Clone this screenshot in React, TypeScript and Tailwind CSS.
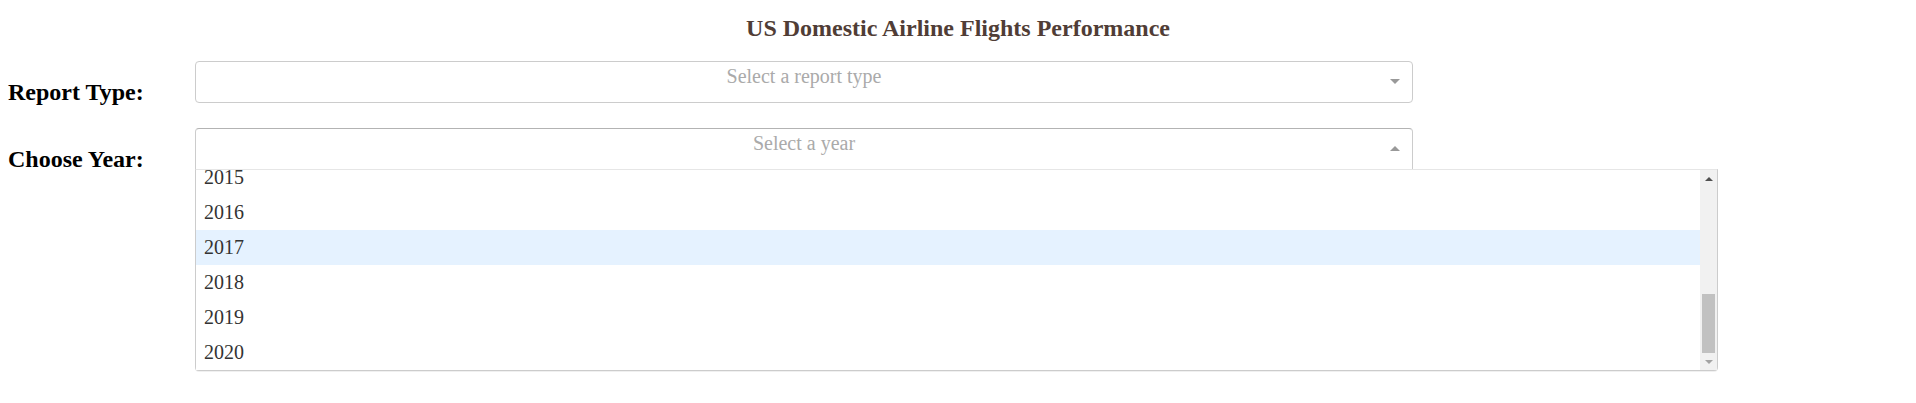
const years = Array.from({ length: 16 }, (_, i) => 2005 + i);

function Label({ children }: { children: React.ReactNode }) {
  return (
    <h2 className="w-[195px] shrink-0 pl-2 pt-[17px] text-[24px] font-bold leading-[28px] text-black">
      {children}
    </h2>
  );
}

function ReportTypeSelect() {
  return (
    <div className="relative h-[42px] w-[1218px] rounded-[4px] border border-[#ccc] bg-white">
      <div className="w-full text-center text-[20px] leading-[28px] text-[#aaa]">Select a report type</div>
      <span className="absolute right-[12px] top-[17px] h-0 w-0 border-x-[5px] border-t-[5px] border-x-transparent border-t-[#999]" />
    </div>
  );
}

function YearSelect() {
  return (
    <div className="relative h-[42px] w-[1218px] rounded-t-[4px] border border-t-[#b3b3b3] border-x-[#ccc] border-b-[#d9d9d9] bg-white">
      <div className="w-full text-center text-[20px] leading-[28px] text-[#aaa]">Select a year</div>
      <span className="absolute right-[12px] top-[17px] h-0 w-0 border-x-[5px] border-b-[5px] border-x-transparent border-b-[#999]" />

      {/* open menu, scrolled to the bottom of the year list */}
      <div className="absolute -left-px top-[40px] z-10 flex h-[202px] w-[1523px] rounded-b-[4px] border border-[#ccc] border-t-[#e6e6e6] bg-white shadow-[0_1px_0_rgba(0,0,0,0.06)]">
        <div className="flex-1 overflow-hidden">
          <div className="mt-[-360px]">
            {years.map((y) => (
              <div
                key={y}
                className={
                  'h-[35px] pl-2 text-[20px] leading-[35px] text-[#333] ' +
                  (y === 2017 ? 'bg-[#e5f2ff]' : 'bg-white')
                }
              >
                {y}
              </div>
            ))}
          </div>
        </div>
        <div className="flex w-[17px] flex-col bg-[#f1f1f1]">
          <div className="flex h-[17px] items-center justify-center">
            <span className="h-0 w-0 border-x-[4px] border-b-[4px] border-x-transparent border-b-[#505050]" />
          </div>
          <div className="flex-1" />
          <div className="mx-[2px] h-[59px] bg-[#c1c1c1]" />
          <div className="flex h-[17px] items-center justify-center">
            <span className="h-0 w-0 border-x-[4px] border-t-[4px] border-x-transparent border-t-[#a3a3a3]" />
          </div>
        </div>
      </div>
    </div>
  );
}

export default function App() {
  return (
    <div className="h-[403px] w-full overflow-hidden bg-white font-['Liberation_Serif','Times_New_Roman',serif]">
      <h1 className="pt-[14px] text-center text-[24px] font-bold leading-[28px] text-[#503D36]">
        US Domestic Airline Flights Performance
      </h1>

      <div className="mt-[19px] flex h-[42px]">
        <Label>Report Type:</Label>
        <ReportTypeSelect />
      </div>

      <div className="mt-[25px] flex h-[42px]">
        <Label>Choose Year:</Label>
        <YearSelect />
      </div>
    </div>
  );
}
